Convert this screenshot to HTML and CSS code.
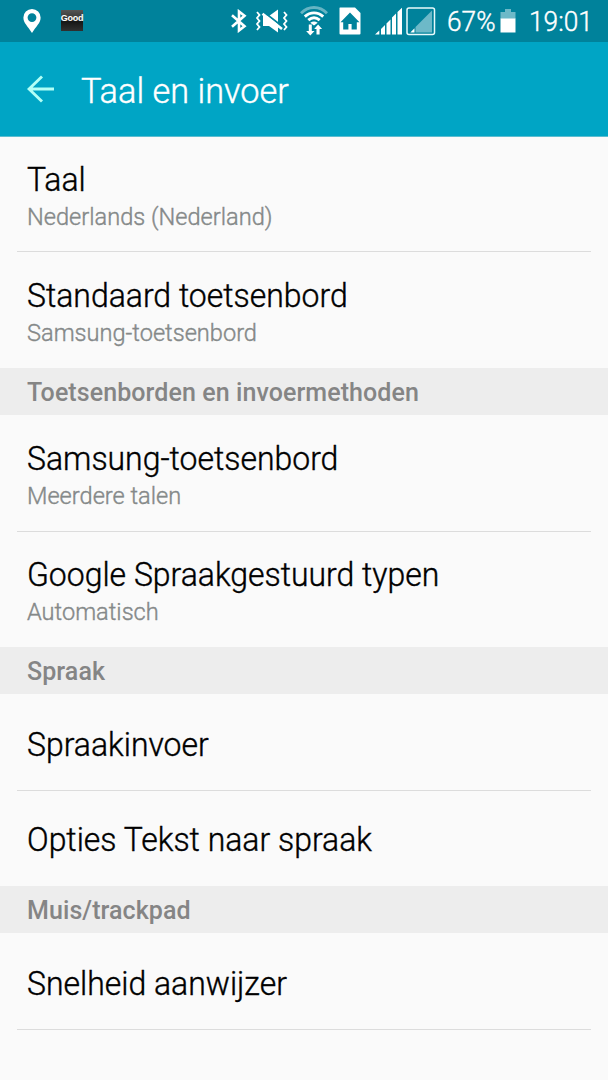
FILE: index.html
```html
<!DOCTYPE html>
<html lang="nl">
<head>
<meta charset="utf-8">
<title>Taal en invoer</title>
<link rel="stylesheet" href="styles.css">
</head>
<body>
<div class="status">
  <svg class="pin" width="18" height="24" viewBox="0 0 18 24"><path fill="#fff" fill-rule="evenodd" d="M9 0a8.6 8.6 0 0 0-8.6 8.8C.4 14 5 17.500 9 24c4-6.500 8.600-10 8.600-15.200A8.600 8.600 0 0 0 9 0zm0 4.200a4.400 4.400 0 1 1 0 8.800 4.400 4.400 0 0 1 0-8.800z"/></svg>
  <div class="good"><span>Good</span></div>
  <div class="icons">
    <svg class="bt" width="16" height="24" viewBox="0 0 16 24"><path fill="none" stroke="#fff" stroke-width="2.600" d="M1 6.300l12.500 10.900L8 21.500v-19l5.500 4.300L1 17.700"/></svg>
    <svg class="mute" width="34" height="24" viewBox="0 0 34 24"><path fill="#fff" d="M8 7h6l9-6.500v23L14 17H8z"/><path stroke="#00829b" stroke-width="2" d="M9 3.200l18 14"/><path stroke="#fff" stroke-width="2.600" d="M7.500 4.800L27 20"/><path fill="none" stroke="#fff" stroke-width="1.800" d="M2 3l2.500 3L2 9l2.500 3L2 15l2.500 3L2 21M29 3l2.500 3L29 9l2.500 3-2.500 3 2.500 3-2.500 3"/></svg>
    <svg class="wifi" width="28" height="30" viewBox="0 0 28 30"><g fill="none" stroke="#fff" stroke-width="2.900"><path stroke="#66b4c3" d="M1 7.200C8.500-.4 19.500-.4 27 7.200"/><path d="M4.800 10.600c5.500-5 12.900-5 18.400 0M8.300 14.200c3.500-3 7.900-3 11.400 0"/></g><path fill="#fff" d="M10.300 16.800q3.700-2.400 7.400 0L14 19.500zM8.800 18.500h3V25h2.700l-4.200 4.500L6.100 25h2.700zM16.500 28.500V23h-2.300l3.900-4.500 4 4.500h-2.500v5.500z"/></svg>
    <svg class="home" width="22" height="28" viewBox="0 0 22 28"><path fill="#fff" d="M1 .5h15L21.500 6v20.500q0 1-1 1H1.500q-1 0-1-1v-25q0-1 .5-1z"/><path fill="#00829b" d="M11 5.500L1.500 15.200h2.700V22.500h5.200v-5.500h3.200v5.500h5.200v-7.300h2.700z"/></svg>
    <svg class="signal" width="28" height="28" viewBox="0 0 28 28"><path fill="#fff" d="M0 27.500l4.300-4v4zM6 22l4-4v9.500H6zM11.500 16.500l4-4v15h-4zM17 10.500l4-4v21h-4zM22.500 5L27 .8v26.700h-4.500z"/></svg>
    <svg class="box" width="30" height="29" viewBox="0 0 30 29"><rect x="1" y="1" width="27.500" height="26.500" rx="2" fill="none" stroke="#e8fafc" stroke-width="1.500"/><path fill="#6db9c8" d="M9.500 20L26 3.500v22H9.500z"/><path fill="#fff" d="M4.300 25.500l4.200-4.200v4.200z"/></svg>
    <span class="pct">67%</span>
    <svg class="bat" width="16" height="24" viewBox="0 0 16 24"><path fill="#6db9c8" d="M5 0h6v3h4.500v7H.5V3H5z"/><path fill="#fff" d="M.5 9.500h15V23.500H.5z"/></svg>
    <span class="time">19:01</span>
  </div>
</div>
<header class="bar">
  <svg width="28" height="28" viewBox="0 0 28 28"><path fill="none" stroke="#b2fff6" stroke-width="2.900" d="M27 14H2M15 1.500L2 14l13 12.500"/></svg>
  <h1>Taal en invoer</h1>
</header>
<main>
  <div class="row first"><p class="title">Taal</p><p class="sub">Nederlands (Nederland)</p></div>
  <div class="row last"><p class="title">Standaard toetsenbord</p><p class="sub">Samsung-toetsenbord</p></div>
  <h2>Toetsenborden en invoermethoden</h2>
  <div class="row"><p class="title">Samsung-toetsenbord</p><p class="sub">Meerdere talen</p></div>
  <div class="row last second"><p class="title">Google Spraakgestuurd typen</p><p class="sub">Automatisch</p></div>
  <h2>Spraak</h2>
  <div class="row single"><p class="title">Spraakinvoer</p></div>
  <div class="row single last"><p class="title">Opties Tekst naar spraak</p></div>
  <h2>Muis/trackpad</h2>
  <div class="row single"><p class="title">Snelheid aanwijzer</p></div>
</main>
</body>
</html>
```
FILE: styles.css
```css
* { box-sizing: border-box; margin: 0; padding: 0; }
body { width: 608px; height: 1080px; overflow: hidden; background: #fafafa; font-family: Roboto, sans-serif; }
svg { display: block; flex: none; }
.status { height: 42px; background: #00829b; display: flex; align-items: flex-start; padding-left: 23px; color: #fff; }
.pin { margin-top: 9px; }
.good { width: 22px; height: 21px; margin: 10px 0 0 20px; background: linear-gradient(#555 0, #333 45%, #161616 55%, #303030 100%); display: flex; justify-content: center; }
.good span { font: bold 9px/16px "Liberation Sans", sans-serif; letter-spacing: -0.3px; }
.icons { flex: 1; display: flex; align-items: flex-start; padding-left: 148px; }
.bt { margin-top: 9px; }
.mute { margin: 9px 0 0 8px; }
.wifi { margin: 6px 0 0 11px; }
.home { margin: 7px 0 0 11px; }
.signal { margin: 7px 0 0 14px; }
.box { margin: 7px 0 0 3px; }
.pct, .time, h1, .title, .sub { font-weight: 300; white-space: nowrap; transform-origin: 0 50%; -webkit-text-stroke: 0.4px currentColor; }
.pct, .time { font-size: 27.500px; line-height: 44px; transform: scaleX(0.955); }
.pct { width: 50px; margin-left: 11px; }
.bat { margin: 9px 0 0 3px; }
.time { margin-left: 13px; }
.bar { height: 95px; background: #00a5c5; border-bottom: 1px solid #5bbdd0; display: flex; align-items: center; padding-left: 27px; gap: 26px; }
h1 { color: #fff; font-size: 34.500px; line-height: 40px; padding-top: 3px; transform: scaleX(0.995); }
.row { height: 117px; margin: 0 17px; padding: 25px 10px 0; border-bottom: 1px solid #dcdcdc; }
.first { height: 115px; padding-top: 24px; }
.last { height: 116px; padding-top: 25px; border-bottom: 0; }
.second { height: 115px; padding-top: 24px; }
.title { color: #000; font-size: 33px; line-height: 38px; transform: scaleX(0.968); }
.sub { color: #858989; font-size: 24.500px; line-height: 28px; margin-top: 4px; transform: scaleX(0.963); }
.single { height: 97px; padding-top: 32px; }
.last.single { height: 95px; padding-top: 30px; }
h2 { height: 47px; padding-left: 27px; background: #ededed; color: #858585; font-size: 25px; line-height: 49px; font-weight: 500; letter-spacing: 0.08px; white-space: nowrap; }
```
